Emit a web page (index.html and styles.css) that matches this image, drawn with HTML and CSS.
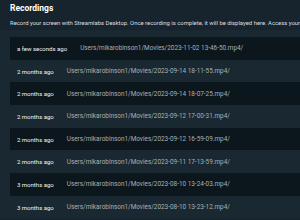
FILE: index.html
```html
<!DOCTYPE html>
<html>
    <head>
        <link rel="stylesheet" href="styles.css">
    </head>
    <body>
        <div class="header">
            <div class="title">Recordings</div>
            <div class="subtitle">Record your screen with Streamlabs Desktop. Once recording is complete, it will be displayed here. Access your</div>
        </div>
        <div class="list">
            <div class="row dark"><span class="time">a few seconds ago</span><span class="path">Users/mikarobinson1/Movies/2023-11-02 13-46-50.mp4/</span></div>
            <div class="row"><span class="time">2 months ago</span><span class="path">Users/mikarobinson1/Movies/2023-09-14 18-11-55.mp4/</span></div>
            <div class="row dark"><span class="time">2 months ago</span><span class="path">Users/mikarobinson1/Movies/2023-09-14 18-07-25.mp4/</span></div>
            <div class="row"><span class="time">2 months ago</span><span class="path">Users/mikarobinson1/Movies/2023-09-12 17-00-31.mp4/</span></div>
            <div class="row dark"><span class="time">2 months ago</span><span class="path">Users/mikarobinson1/Movies/2023-09-12 16-59-09.mp4/</span></div>
            <div class="row"><span class="time">2 months ago</span><span class="path">Users/mikarobinson1/Movies/2023-09-11 17-13-59.mp4/</span></div>
            <div class="row dark"><span class="time">3 months ago</span><span class="path">Users/mikarobinson1/Movies/2023-08-10 13-24-03.mp4/</span></div>
            <div class="row"><span class="time">3 months ago</span><span class="path">Users/mikarobinson1/Movies/2023-08-10 13-23-12.mp4/</span></div>
        </div>
    </body>
</html>
```

FILE: styles.css
```css
body {
    margin: 0;
    background-color: #17242d;
    font-family: Roboto, sans-serif;
    overflow: hidden;
    width: 300px;
    height: 220px;
}

.header {
    padding: 2px 10px 0 10px;
    height: 28px;
}

.title {
    color: white;
    font-size: 8.5px;
    font-weight: bold;
    line-height: 12px;
}

.subtitle {
    color: #dcdfe0;
    font-size: 5.9px;
    line-height: 10px;
    margin-top: 4px;
    white-space: nowrap;
}

.list {
    background-color: #1a2831;
    padding: 7px 0 0 10px;
}

.row {
    display: flex;
    align-items: center;
    gap: 13px;
    height: 22.7px;
    padding-left: 7px;
    font-size: 6px;
    white-space: nowrap;
}

.dark {
    background-color: #0c161d;
}

.time {
    color: #f2f3f4;
}

.path {
    color: #a8b0b5;
    font-size: 6.4px;
}
```
